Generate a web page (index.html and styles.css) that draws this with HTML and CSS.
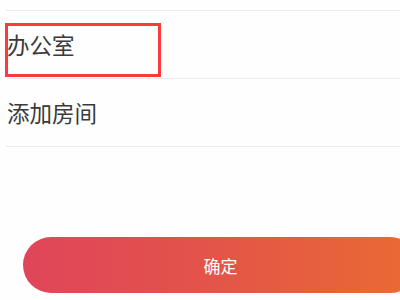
FILE: index.html
```html
<!DOCTYPE html>
<html lang="zh">
<head>
<meta charset="utf-8">
<link rel="stylesheet" href="styles.css">
</head>
<body>
<div class="page">
  <ul class="list">
    <li class="row row-cut"></li>
    <li class="row">
      <span class="label">办公室</span>
      <span class="highlight"></span>
    </li>
    <li class="row"><span class="label">添加房间</span></li>
  </ul>
  <button class="confirm" type="button">确定</button>
</div>
</body>
</html>
```
FILE: styles.css
```css
html, body {
  margin: 0;
  padding: 0;
  background: #fefefe;
}
.page {
  width: 400px;
  height: 300px;
  overflow: hidden;
  font-family: "Noto Sans CJK SC", "Noto Sans", sans-serif;
}
.list {
  list-style: none;
  margin: 0 0 0 6px;
  padding: 0;
}
.row {
  position: relative;
  display: flex;
  align-items: center;
  height: 67px;
  border-bottom: 1px solid #ebebeb;
  padding-left: 1px;
}
.row-cut {
  height: 10px;
  border-bottom: 1px solid #ebebeb;
}
.label {
  font-size: 22.5px;
  color: #3a3a3a;
  line-height: 1;
}
.highlight {
  position: absolute;
  left: -1px;
  top: 12px;
  width: 150px;
  height: 48px;
  border: 3px solid #fb3a3d;
  pointer-events: none;
}
.confirm {
  display: block;
  margin: 90px 0 0 23px;
  width: 395px;
  height: 56px;
  border: 0;
  border-radius: 28px;
  background: linear-gradient(90deg, #e0455a 0%, #e3534a 45%, #e96b32 100%);
  color: #ffffff;
  font-family: "Noto Sans CJK SC", "Noto Sans", sans-serif;
  font-size: 17px;
  padding: 0;
}
```
